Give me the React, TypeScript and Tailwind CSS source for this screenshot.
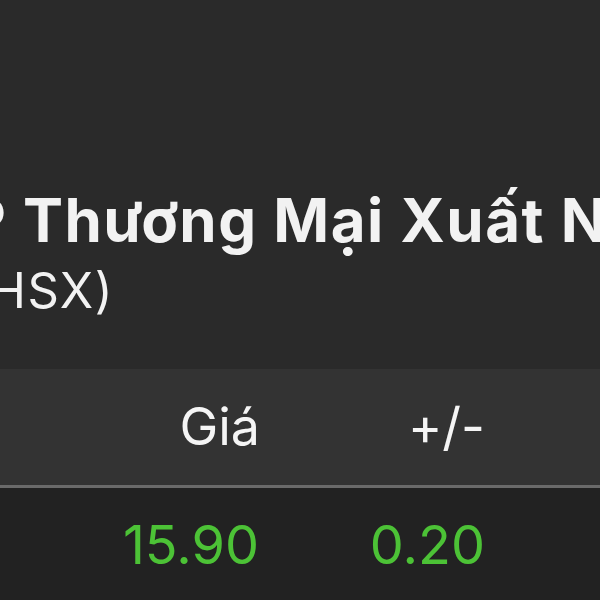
export default function App() {
  const font = { fontFamily: 'Inter, "Noto Sans", sans-serif' };
  return (
    <div className="w-[600px] h-[600px] overflow-hidden bg-[#2a2a2a] flex flex-col" style={font}>
      <div className="h-[184px] shrink-0" />
      <div className="overflow-hidden whitespace-nowrap shrink-0">
        <div className="ml-[-79px] text-[60px] leading-[72px] font-bold text-[#f2f2f2] tracking-[1.5px]">
          CP Thương Mại Xuất Nhập Khẩu
        </div>
        <div className="ml-[-157px] mt-[7px] text-[49px] leading-[56px] font-normal text-[#f2f2f2] tracking-[1.5px]">
          TMS (HSX)
        </div>
      </div>
      <div className="h-[50px] shrink-0" />
      <div className="h-[116px] shrink-0 bg-[#333333] flex items-center">
        <div className="w-[260px] text-right text-[52px] text-[#f5f5f5]">Giá</div>
        <div className="w-[225px] text-right text-[52px] text-[#f5f5f5]">+/-</div>
      </div>
      <div className="h-[3px] shrink-0 bg-[#6a6a6a]" />
      <div className="flex-1 bg-[#222222] flex items-center">
        <div className="w-[259px] text-right text-[54px] text-[#4cc236]">15.90</div>
        <div className="w-[226px] text-right text-[54px] text-[#4cc236]">0.20</div>
      </div>
    </div>
  );
}
